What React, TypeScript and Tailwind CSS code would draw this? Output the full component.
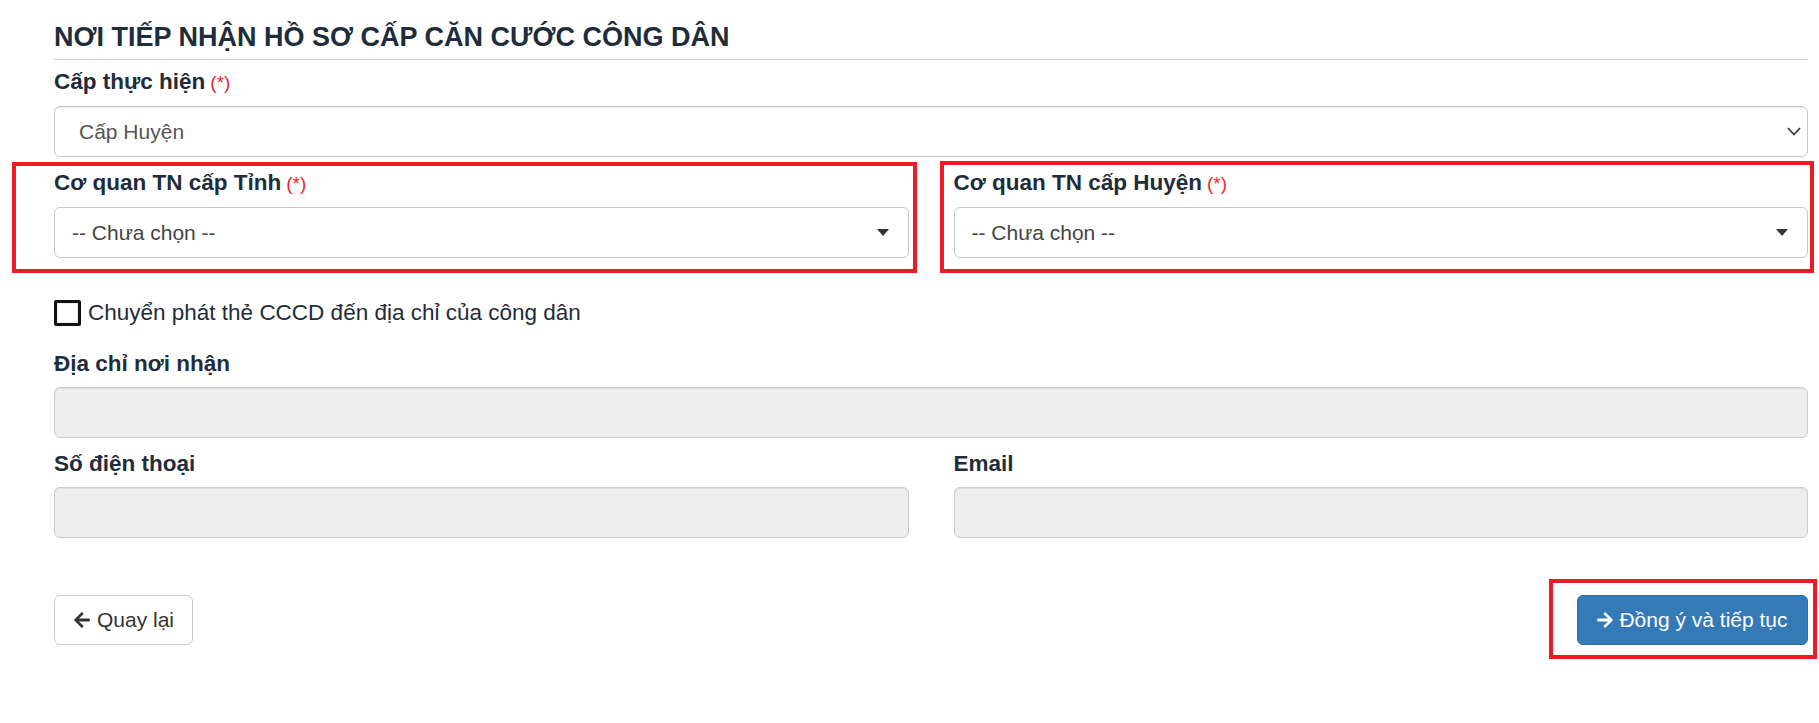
import React from "react";

const txt = "text-[#1f2c3b]";

function Label({ children, req }: { children: React.ReactNode; req?: boolean }) {
  return (
    <div className={`text-[22.5px] leading-[30px] font-bold ${txt} mb-[8px] whitespace-nowrap`}>
      {children}
      {req && <span className="ml-[5px] text-[19px] font-normal text-[#f0262e]">(*)</span>}
    </div>
  );
}

function Select2Box() {
  return (
    <div className="h-[51px] border border-[#c8c8c8] rounded-[6px] bg-white flex items-center pl-[17px] pr-[18px]">
      <span className="text-[21px] text-[#444] flex-1">-- Chưa chọn --</span>
      <svg width="12" height="7" viewBox="0 0 12 7" className="mr-[1px]">
        <path d="M0 0 L12 0 L6 7 Z" fill="#333" />
      </svg>
    </div>
  );
}

function DisabledInput() {
  return (
    <div className="h-[51px] border border-[#cccccc] rounded-[6px] bg-[#eeeeee] shadow-[inset_0_1px_1px_rgba(0,0,0,0.075)]" />
  );
}

export default function App() {
  return (
    <div className="relative w-[1819px] h-[723px] bg-white font-['Liberation_Sans',Arial,sans-serif] overflow-hidden">
      <div className="ml-[54px] w-[1754px] pt-[22px]">
        <div className={`text-[27px] leading-[30px] font-bold ${txt} pb-[7px] border-b border-[#cfcfcf] whitespace-nowrap`}>
          NƠI TIẾP NHẬN HỒ SƠ CẤP CĂN CƯỚC CÔNG DÂN
        </div>

        <div className="mt-[7px]">
          <Label req>Cấp thực hiện</Label>
          <div className="h-[51px] border border-[#c8c8c8] rounded-[6px] bg-white flex items-center pl-[24px] pr-[6px] shadow-[inset_0_1px_1px_rgba(0,0,0,0.075)]">
            <span className="text-[21px] text-[#555] flex-1">Cấp Huyện</span>
            <svg width="14" height="9" viewBox="0 0 14 9">
              <path d="M1 1 L7 7.5 L13 1" fill="none" stroke="#333" strokeWidth="1.6" />
            </svg>
          </div>
        </div>

        <div className="grid grid-cols-2 gap-x-[45px] mt-[11px]">
          <div>
            <Label req>Cơ quan TN cấp Tỉnh</Label>
            <Select2Box />
          </div>
          <div>
            <Label req>Cơ quan TN cấp Huyện</Label>
            <Select2Box />
          </div>
        </div>

        <div className="mt-[42px] h-[26px] flex items-center">
          <div className="w-[27px] h-[26px] border-[3px] border-[#111] bg-white rounded-[2px] shadow-[inset_0_0_2px_rgba(0,0,0,0.25)]" />
          <span className={`ml-[7px] text-[22.5px] ${txt} whitespace-nowrap`}>
            Chuyển phát thẻ CCCD đến địa chỉ của công dân
          </span>
        </div>

        <div className="mt-[23px]">
          <Label>Địa chỉ nơi nhận</Label>
          <DisabledInput />
        </div>

        <div className="grid grid-cols-2 gap-x-[45px] mt-[11px]">
          <div>
            <Label>Số điện thoại</Label>
            <DisabledInput />
          </div>
          <div>
            <Label>Email</Label>
            <DisabledInput />
          </div>
        </div>

        <div className="mt-[57px] flex justify-between">
          <button className="h-[50px] px-[18px] border border-[#cccccc] rounded-[6px] bg-white flex items-center gap-[6px] text-[21px] text-[#333]">
            <svg width="18" height="18" viewBox="0 0 448 512">
              <path
                fill="#333"
                d="M257.5 445.1l-22.2 22.2c-9.4 9.4-24.6 9.4-33.900 0L7 273c-9.4-9.4-9.4-24.6 0-33.9L201.4 44.7c9.4-9.4 24.6-9.4 33.9 0l22.2 22.2c9.5 9.5 9.3 25-.4 34.3L136.6 216H424c13.3 0 24 10.7 24 24v32c0 13.3-10.7 24-24 24H136.6l120.5 114.8c9.8 9.3 10 24.8.4 34.3z"
              />
            </svg>
            Quay lại
          </button>
          <button className="h-[50px] w-[231px] px-[18px] border border-[#2e6da4] rounded-[6px] bg-[#337ab7] flex items-center justify-center gap-[6px] text-[21px] text-white">
            <svg width="16" height="18" viewBox="0 0 448 512">
              <path
                fill="#fff"
                d="M190.5 66.9l22.2-22.2c9.4-9.4 24.6-9.4 33.9 0L441 239c9.4 9.4 9.4 24.6 0 33.9L246.6 467.3c-9.4 9.4-24.6 9.4-33.9 0l-22.2-22.2c-9.5-9.5-9.3-25 .4-34.3L311.4 296H24c-13.3 0-24-10.7-24-24v-32c0-13.3 10.7-24 24-24h287.4L190.9 101.2c-9.8-9.3-10-24.8-.4-34.3z"
              />
            </svg>
            Đồng ý và tiếp tục
          </button>
        </div>
      </div>

      {/* annotation boxes */}
      <div className="absolute left-[12px] top-[162px] w-[905px] h-[111px] border-[4px] border-[#ed1c24]" />
      <div className="absolute left-[940px] top-[161px] w-[874px] h-[112px] border-[4px] border-[#ed1c24]" />
      <div className="absolute left-[1549px] top-[579px] w-[268px] h-[80px] border-[4px] border-[#ed1c24]" />
    </div>
  );
}
